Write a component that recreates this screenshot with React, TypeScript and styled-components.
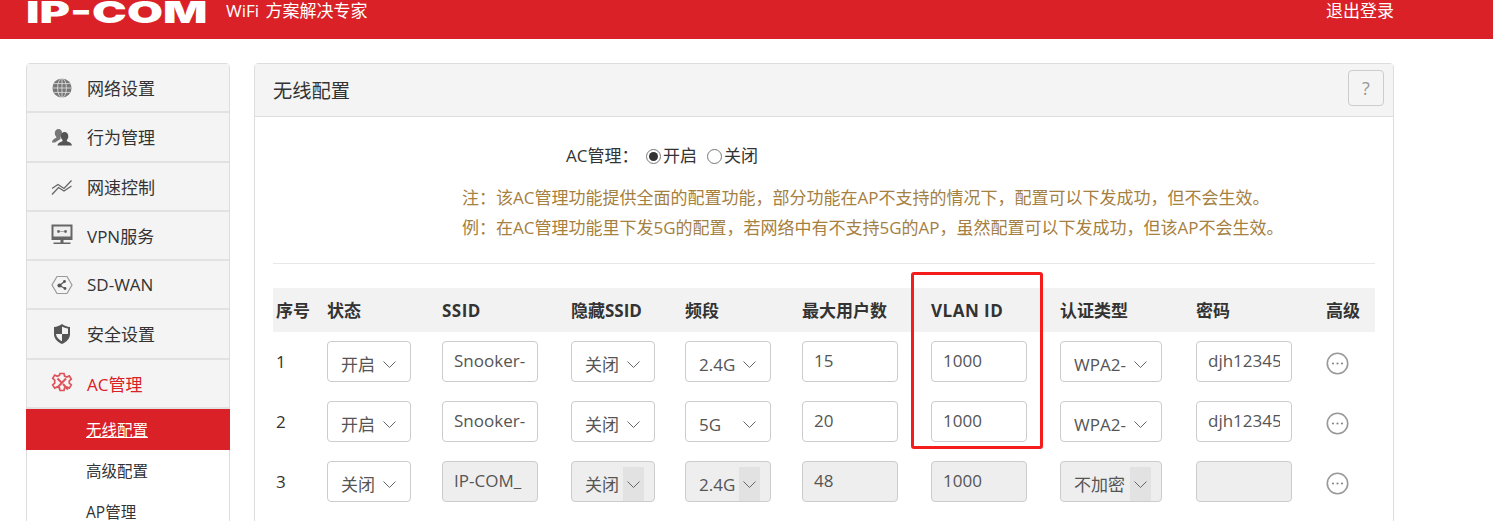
import React from "react";
import styled, { createGlobalStyle } from "styled-components";

const Global = createGlobalStyle`
  html, body { margin: 0; padding: 0; background: #fff; overflow: hidden; }
  body { font-family: "Open Sans", "Noto Sans CJK SC", sans-serif; color: #333; }
  #root { height: 521px; overflow: hidden; }
  * { box-sizing: border-box; }
`;

const Page = styled.div`position: relative; width: 1493px; height: 521px; overflow: hidden;`;

const Header = styled.header`
  height: 39px; background: #da2128; color: #fff;
  display: flex; align-items: flex-start; padding: 0 99px 0 26px;
`;
const Logo = styled.div`
  width: 200px; height: 22px; flex: none;
  font-family: "Inter", sans-serif; font-weight: 900; font-size: 30px; line-height: 22px;
  span { display: inline-block; transform: scaleX(1.55); transform-origin: 0 50%; white-space: nowrap; position: relative; top: 0.5px; }
`;
const Slogan = styled.div`font-size: 17px; line-height: 21px; white-space: nowrap; word-spacing: 2px;`;
const Logout = styled.a`margin-left: auto; font-size: 17px; line-height: 21px; color: #fff;`;

const Body = styled.div`display: flex; align-items: flex-start; gap: 24px; padding: 24px 0 0 26px;`;

const Sidebar = styled.nav`
  width: 204px; flex: none; height: 520px; border: 1px solid #ddd; border-radius: 4px 4px 0 0; background: #fff;
`;
const MenuItem = styled.div<{ $active?: boolean }>`
  height: 49.25px; background: #f4f4f4; border-bottom: 2px solid #e2e2e2;
  display: flex; align-items: center; padding: 0 0 0 24px; gap: 14px;
  font-size: 17px; color: ${p => (p.$active ? "#da2128" : "#333")};
  svg { width: 22px; height: 22px; flex: none; }
`;
const SubItem = styled.div<{ $active?: boolean }>`
  height: 41px; margin-left: -1px; margin-right: -1px; padding-left: 60px; display: flex; align-items: center;
  font-size: 15.5px; background: ${p => (p.$active ? "#da2128" : "transparent")};
  color: ${p => (p.$active ? "#fff" : "#333")};
  text-decoration: ${p => (p.$active ? "underline" : "none")};
`;

const Panel = styled.section`
  width: 1140px; flex: none; height: 520px; border: 1px solid #ddd; border-radius: 4px 4px 0 0;
`;
const PanelHead = styled.div`
  height: 53px; background: #f4f4f4; border-bottom: 1px solid #ddd;
  display: flex; align-items: flex-start; justify-content: space-between; padding: 6px 9px 0 18px;
  h2 { margin: 0; font-weight: 400; font-size: 19.25px; line-height: 42px; color: #333; }
`;
const Help = styled.div`
  width: 36px; height: 36px; border: 1px solid #ccc; border-radius: 4px; color: #999;
  display: flex; align-items: center; justify-content: center; font-size: 18px;
`;
const PanelBody = styled.div`padding: 0 18px;`;
const ACRow = styled.div`
  height: 66px; padding: 28px 0 0 293px; display: flex; align-items: flex-start; font-size: 17px; line-height: 22px; color: #333;
`;
const RadioLabel = styled.label`display: inline-flex; align-items: center; margin-right: 10px;`;
const Radio = styled.span<{ $on?: boolean }>`
  width: 15px; height: 15px; border-radius: 50%; border: 1px solid #777; margin-right: 2px; display: flex; align-items: center; justify-content: center;
  &::after { content: ""; width: 9px; height: 9px; border-radius: 50%; background: ${p => (p.$on ? "#333" : "transparent")}; }
`;
const ACLabel = styled.span`width: 80px;`;
const Notes = styled.div`
  padding-left: 189px; color: #a5803f; font-size: 17px; line-height: 30px; height: 81px;
  border-bottom: 1px solid #e8e8e8; white-space: nowrap;
`;
const Table = styled.div`
  margin-top: 24px;
  display: grid; grid-template-columns: 54px 115px 129px 114px 117px 129px 129px 136px 130px 49px;
`;
const HeadCell = styled.div<{ $latin?: boolean }>`
  height: 44px; background: #f2f2f2; font-weight: 700; font-size: 17px; line-height: 46px; color: #333; white-space: nowrap;
  letter-spacing: ${p => (p.$latin ? "0.5px" : "0")};
`;
const FirstHead = styled(HeadCell)`padding-left: 3px;`;
const Cell = styled.div`height: 60px; padding-top: 9px;`;
const IndexCell = styled(Cell)`padding: 18px 0 0 3px; font-size: 17px; line-height: 24px; color: #333;`;
const Field = styled.input`
  display: block; width: 96px; height: 41px; border: 1px solid #ccc; border-radius: 4px; padding: 0 11px 2px;
  font: 17px "Open Sans", "Noto Sans CJK SC", sans-serif; color: #555; background: #fff; outline: none;
  &:disabled { background: #eee; color: #555; opacity: 1; }
`;
const SelectBox = styled.div<{ $w: number; $off?: boolean }>`
  position: relative; width: ${p => p.$w}px; height: 41px; border: 1px solid #ccc; border-radius: 4px;
  background: ${p => (p.$off ? "#eee" : "#fff")}; color: #555; font-size: 17px; line-height: 45px; padding-left: 13px;
  span { display: block; overflow: hidden; white-space: nowrap; width: ${p => (p.$w > 90 ? 52 : 40)}px; }
`;
const Arrow = styled.i<{ $off?: boolean }>`
  position: absolute; right: 10px; top: 5px; bottom: 0; width: 21px; display: flex; align-items: center; justify-content: center;
  background: ${p => (p.$off ? "#e2e2e2" : "transparent")};
  svg { width: 15px; height: 9px; }
`;
const MoreCell = styled(Cell)`padding-top: 20px; svg { display: block; width: 23px; height: 23px; }`;
const Highlight = styled.div`
  position: absolute; left: 911px; top: 272px; width: 132px; height: 177px;
  border: 3px solid #f51c1c; border-radius: 3px; pointer-events: none;
`;

const Icons: Record<string, React.ReactNode> = {
  globe: (
    <svg viewBox="0 0 22 22" fill="none">
      <circle cx="11" cy="11" r="9.6" fill="#777" />
      <ellipse cx="11" cy="11" rx="4.400" ry="9.600" stroke="#e4e4e4" strokeWidth=".8" />
      <path d="M1.400 11h19.200M2.600 6.600h16.800M2.600 15.400h16.800M11 1.400v19.200" stroke="#e4e4e4" strokeWidth=".8" />
    </svg>
  ),
  users: (
    <svg viewBox="0 0 22 22">
      <path d="M7.500 3c2.200 0 3.600 1.700 3.600 4 0 1.700-.7 3-1.600 3.900V13L4 16.500H1c0-2.500 2.200-3.800 4.300-4.700v-1C4.400 9.900 3.800 8.700 3.800 7c0-2.300 1.500-4 3.700-4z" fill="#777" />
      <path d="M13.500 6c2.300 0 3.800 1.800 3.800 4.200 0 1.600-.7 2.900-1.500 3.700v1.300c2.400.9 5 1.700 5.200 4.300H6.500c.2-2.600 2.800-3.400 5-4.300v-1.300c-.8-.8-1.600-2.100-1.600-3.700C9.900 7.800 11.300 6 13.500 6z" fill="#555" />
    </svg>
  ),
  trend: (
    <svg viewBox="0 0 22 22" fill="none" stroke="#666" strokeWidth="1.300">
      <path d="M1 13.500 7 9.500l6 4 7.500-8" />
      <path d="M1 19.500 7.500 12.500l5.500 3.500 7.500-5" />
    </svg>
  ),
  monitor: (
    <svg viewBox="0 0 22 22" fill="none">
      <rect x="1.500" y="1.500" width="19" height="13.500" fill="#eee" stroke="#666" strokeWidth="2" />
      <path d="M1 12.500h20V16H1zM9.500 16h3v2.500h-3zM2.500 18.500h17V20h-17z" fill="#666" />
      <circle cx="7.500" cy="7.500" r="1.400" fill="#666" />
      <circle cx="14.500" cy="7.500" r="1.400" fill="#666" />
      <path d="M9 7.500h4" stroke="#aaa" strokeWidth="1" />
    </svg>
  ),
  hex: (
    <svg viewBox="0 0 22 22" fill="none" stroke="#999" strokeWidth="1.200">
      <path d="M6 2.500h10l5 8.500-5 8.500H6L1 11z" />
      <circle cx="8.500" cy="11.500" r="2.100" fill="#555" stroke="none" />
      <circle cx="13.500" cy="7.500" r="1.400" fill="#555" stroke="none" />
      <circle cx="14" cy="14.500" r="1.400" fill="#555" stroke="none" />
      <path d="M8.500 11.500l5-4M8.500 11.500l5.500 3" stroke="#555" />
    </svg>
  ),
  shield: (
    <svg viewBox="0 0 22 22">
      <path d="M11 1c2.500 1.800 5 2.700 8 3v7c0 4.800-3.500 8-8 10-4.500-2-8-5.200-8-10V4c3-.3 5.500-1.200 8-3z" fill="#555" />
      <path d="M11 3.500V11h6c0 0 0 0 0 0V5.500c-2.200-.3-4-1-6-2zM11 11H5c.3 3.500 3 5.700 6 7.300z" fill="#f4f4f4" />
    </svg>
  ),
  gear: (
    <svg viewBox="0 0 22 22" fill="none" stroke="#e0525a" strokeWidth="1.700">
      <path d="M9 1.500h4l.6 2.600 2.200 1 2.500-1.200 2 3.200-2 1.800v2.200l2 1.800-2 3.200-2.500-1.200-2.200 1-.6 2.600H9l-.6-2.600-2.200-1-2.500 1.200-2-3.200 2-1.800V8.100l-2-1.800 2-3.200 2.500 1.200 2.200-1z" />
      <path d="M6.500 6.500l4 4M12 12l5 5.500M15 6.500l-8.500 9" strokeWidth="2" />
    </svg>
  ),
};

const Chevron = () => (
  <svg viewBox="0 0 15 9" fill="none" stroke="#666" strokeWidth="1"><path d="M1.500 1.500 7.500 7.500l6-6" /></svg>
);
const More = () => (
  <svg viewBox="0 0 23 23" fill="none">
    <circle cx="11.500" cy="11.500" r="10.200" stroke="#999" strokeWidth="1.600" />
    <circle cx="7" cy="11.500" r="1.100" fill="#888" />
    <circle cx="11.500" cy="11.500" r="1.100" fill="#888" />
    <circle cx="16" cy="11.500" r="1.100" fill="#888" />
  </svg>
);

const Select = ({ w, v, off, arrowOff }: { w: number; v: string; off?: boolean; arrowOff?: boolean }) => (
  <SelectBox $w={w} $off={off}>
    <span>{v}</span>
    <Arrow $off={arrowOff}><Chevron /></Arrow>
  </SelectBox>
);

const rows = [
  { n: 1, st: "开启", ssid: "Snooker-", hide: "关闭", f: "2.4G", max: "15", vlan: "1000", auth: "WPA2-PSK", pw: "djh123456789", off: false },
  { n: 2, st: "开启", ssid: "Snooker-", hide: "关闭", f: "5G", max: "20", vlan: "1000", auth: "WPA2-PSK", pw: "djh123456789", off: false },
  { n: 3, st: "关闭", ssid: "IP-COM_", hide: "关闭", f: "2.4G", max: "48", vlan: "1000", auth: "不加密", pw: "", off: true },
];
const heads = ["状态", "SSID", "隐藏SSID", "频段", "最大用户数", "VLAN ID", "认证类型", "密码", "高级"];
const menu: [string, string][] = [
  ["globe", "网络设置"], ["users", "行为管理"], ["trend", "网速控制"], ["monitor", "VPN服务"], ["hex", "SD-WAN"], ["shield", "安全设置"],
];

const note1 = "注\uFF1A该AC管理功能提供全面的配置功能\uFF0C部分功能在AP不支持的情况下\uFF0C配置可以下发成功\uFF0C但不会生效。";
const note2 = "例\uFF1A在AC管理功能里下发5G的配置\uFF0C若网络中有不支持5G的AP\uFF0C虽然配置可以下发成功\uFF0C但该AP不会生效。";

export default function App() {
  return (
    <Page>
      <Global />
      <Header>
        <Logo><span>IP-COM</span></Logo>
        <Slogan>WiFi 方案解决专家</Slogan>
        <Logout>退出登录</Logout>
      </Header>
      <Body>
        <Sidebar>
          {menu.map(([i, t]) => (
            <MenuItem key={t}>{Icons[i]}<span>{t}</span></MenuItem>
          ))}
          <MenuItem $active>{Icons.gear}<span>AC管理</span></MenuItem>
          <SubItem $active>无线配置</SubItem>
          <SubItem>高级配置</SubItem>
          <SubItem>AP管理</SubItem>
        </Sidebar>
        <Panel>
          <PanelHead>
            <h2>无线配置</h2>
            <Help>?</Help>
          </PanelHead>
          <PanelBody>
            <ACRow>
              <ACLabel>{"AC管理\uFF1A"}</ACLabel>
              <RadioLabel><Radio $on />开启</RadioLabel>
              <RadioLabel><Radio />关闭</RadioLabel>
            </ACRow>
            <Notes>
              {note1}<br />
              {note2}
            </Notes>
            <Table>
              <FirstHead>序号</FirstHead>
              {heads.map(h => <HeadCell key={h} $latin={h === "SSID" || h === "VLAN ID"}>{h}</HeadCell>)}
              {rows.map(r => (
                <React.Fragment key={r.n}>
                  <IndexCell>{r.n}</IndexCell>
                  <Cell><Select w={84} v={r.st} /></Cell>
                  <Cell><Field readOnly disabled={r.off} value={r.ssid} /></Cell>
                  <Cell><Select w={84} v={r.hide} off={r.off} arrowOff={r.off} /></Cell>
                  <Cell><Select w={86} v={r.f} off={r.off} arrowOff={r.off} /></Cell>
                  <Cell><Field readOnly disabled={r.off} value={r.max} /></Cell>
                  <Cell><Field readOnly disabled={r.off} value={r.vlan} /></Cell>
                  <Cell><Select w={102} v={r.auth} off={r.off} arrowOff={r.off} /></Cell>
                  <Cell><Field readOnly disabled={r.off} value={r.pw} /></Cell>
                  <MoreCell><More /></MoreCell>
                </React.Fragment>
              ))}
            </Table>
          </PanelBody>
        </Panel>
      </Body>
      <Highlight />
    </Page>
  );
}
